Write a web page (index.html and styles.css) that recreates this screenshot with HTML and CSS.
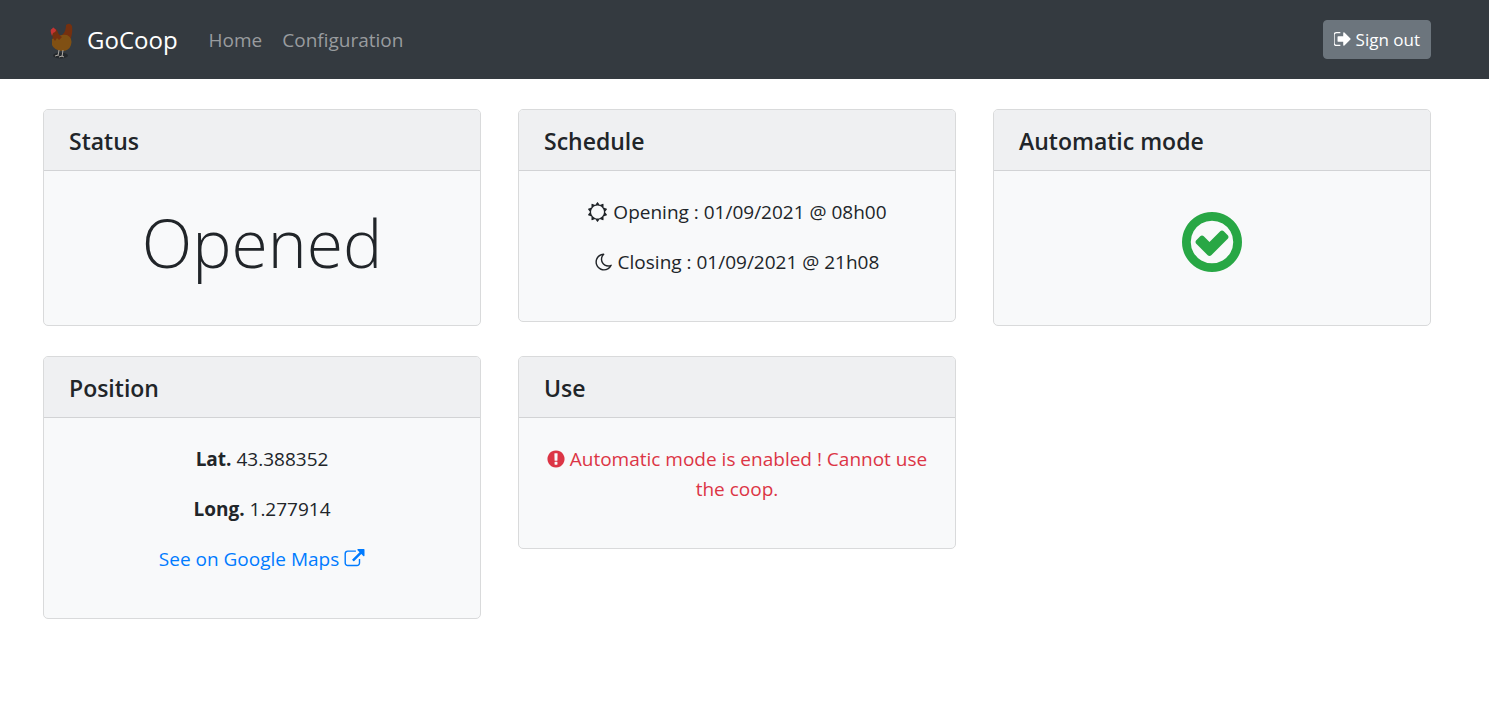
FILE: index.html
```html
<!DOCTYPE html>
<html lang="en">
<head>
<meta charset="utf-8">
<title>GoCoop</title>
<link rel="stylesheet" href="styles.css">
</head>
<body>
<header class="navbar">
  <a class="brand" href="#">
    <svg class="logo" viewBox="1 0 38 38" aria-hidden="true">
      <ellipse cx="18.500" cy="34.500" rx="7.500" ry="3" fill="#25292d"/>
      <path d="M19 21L20 14Q24 11 24 4Q28 1 30 5Q31 12 28 20Z" fill="#75300f"/>
      <path d="M11 8Q15 7 16 12L20 17L11 21Q11 14 9 11Z" fill="#75300f"/>
      <path d="M10 18Q13 16 16 16Q19 13 25 14Q31 17 29 24Q27 30 20 30Q12 29 10 24Z" fill="#805013"/>
      <path d="M11 17L13 12L20 16L17 19L15 17L13 20Z" fill="#75300f"/>
      <path d="M9 12Q8 8 10 8Q11 5 13 8Q15 9 13 11L11 12L10 15Z" fill="#c43434"/>
      <path d="M17 29L16 35M16 34L13 35M21 29L20 36M20 35L17 36M20 35L22 36" stroke="#aaa6a0" stroke-width="1" fill="none"/>
    </svg>
    <span>GoCoop</span>
  </a>
  <nav class="links">
    <a href="#">Home</a>
    <a href="#">Configuration</a>
  </nav>
  <button class="signout" type="button"><svg class="icon" viewBox="128 0 1536 1792" aria-hidden="true"><path d="M704 1440q0 4 1 20t.5 26.500-3 23.500-10 19.500-20.500 6.500h-320q-119 0-203.500-84.500t-84.500-203.500v-704q0-119 84.500-203.500t203.500-84.500h320q13 0 22.500 9.500t9.500 22.500q0 4 1 20t.5 26.500-3 23.500-10 19.500-20.500 6.500h-320q-66 0-113 47t-47 113v704q0 66 47 113t113 47h312l11.500 1 11.500 3 8 5.500 7 9 2 13.500zm928-544q0 26-19 45l-544 544q-19 19-45 19t-45-19-19-45v-288h-448q-26 0-45-19t-19-45v-384q0-26 19-45t45-19h448v-288q0-26 19-45t45-19 45 19l544 544q19 19 19 45z"/></svg> Sign out</button>
</header>
<main class="grid">
  <section class="card">
    <h2 class="card-title">Status</h2>
    <div class="card-body"><p class="display">Opened</p></div>
  </section>
  <section class="card">
    <h2 class="card-title">Schedule</h2>
    <div class="card-body">
      <p><svg class="icon wide" viewBox="0 0 1792 1792" aria-hidden="true"><path d="M1472 896q0-117-45.500-223.500t-123-184-184-123-223.500-45.500-223.500 45.500-184 123-123 184-45.500 223.500 45.500 223.500 123 184 184 123 223.500 45.500 223.500-45.500 184-123 123-184 45.500-223.500zm276 277q-4 15-20 20l-292 96v306q0 16-13 26-15 10-29 4l-292-94-180 248q-10 13-26 13t-26-13l-180-248-292 94q-14 6-29-4-13-10-13-26v-306l-292-96q-16-5-20-20-5-17 4-29l180-248-180-248q-9-13-4-29 4-15 20-20l292-96v-306q0-16 13-26 15-10 29-4l292 94 180-248q9-12 26-12t26 12l180 248 292-94q14-6 29 4 13 10 13 26v306l292 96q16 5 20 20 5 16-4 29l-180 248 180 248q9 12 4 29z"/></svg> Opening : 01/09/2021 @ 08h00</p>
      <p><svg class="icon" viewBox="128 0 1536 1792" aria-hidden="true"><path d="M1390 1303q-54 9-110 9-182 0-337-90t-245-245-90-337q0-192 104-357-201 60-328.500 229t-127.500 384q0 130 51 248.500t136.500 204 204 136.500 248.500 51q144 0 273.500-61.500t220.500-171.500zm203-85q-94 203-283.500 324.500t-413.500 121.500q-156 0-298-61t-245-164-164-245-61-298q0-153 57.500-292.500t156-241.500 235.500-164.500 290-68.500q44-2 61 39 18 41-15 72-86 78-131.500 181.500t-45.500 218.500q0 148 73 273t198 198 273 73q118 0 228-51 41-18 72 13 14 14 17.500 34t-4.500 38z"/></svg> Closing : 01/09/2021 @ 21h08</p>
    </div>
  </section>
  <section class="card">
    <h2 class="card-title">Automatic mode</h2>
    <div class="card-body">
      <p class="display enabled"><svg class="check" viewBox="128 128 1536 1536" role="img" aria-label="Enabled"><path d="M1299 813l-422 422q-19 19-45 19t-45-19l-294-294q-19-19-19-45t19-45l102-102q19-19 45-19t45 19l147 147 275-275q19-19 45-19t45 19l102 102q19 19 19 45t-19 45zm141 83q0-148-73-273t-198-198-273-73-273 73-198 198-73 273 73 273 198 198 273 73 273-73 198-198 73-273zm224 0q0 209-103 385.500t-279.500 279.500-385.500 103-385.500-103-279.500-279.500-103-385.500 103-385.500 279.500-279.500 385.500-103 385.500 103 279.500 279.500 103 385.500z"/></svg></p>
    </div>
  </section>
  <section class="card">
    <h2 class="card-title">Position</h2>
    <div class="card-body">
      <p><strong>Lat.</strong> 43.388352</p>
      <p><strong>Long.</strong> 1.277914</p>
      <p><a class="map-link" href="#">See on Google Maps <svg class="icon wide" viewBox="0 0 1792 1792" aria-hidden="true"><path d="M1408 928v320q0 119-84.500 203.500t-203.500 84.500h-832q-119 0-203.500-84.500t-84.500-203.500v-832q0-119 84.500-203.500t203.500-84.500h704q14 0 23 9t9 23v64q0 14-9 23t-23 9h-704q-66 0-113 47t-47 113v832q0 66 47 113t113 47h832q66 0 113-47t47-113v-320q0-14 9-23t23-9h64q14 0 23 9t9 23zm384-864v512q0 26-19 45t-45 19-45-19l-176-176-652 652q-10 10-23 10t-23-10l-114-114q-10-10-10-23t10-23l652-652-176-176q-19-19-19-45t19-45 45-19h512q26 0 45 19t19 45z"/></svg></a></p>
    </div>
  </section>
  <section class="card">
    <h2 class="card-title">Use</h2>
    <div class="card-body">
      <p class="danger"><svg class="icon" viewBox="128 0 1536 1792" aria-hidden="true"><path d="M896 128q209 0 385.500 103t279.500 279.500 103 385.500-103 385.500-279.500 279.500-385.500 103-385.500-103-279.500-279.500-103-385.500 103-385.500 279.500-279.500 385.500-103zm128 1247v-190q0-14-9-23.500t-22-9.500h-192q-13 0-23 10t-10 23v190q0 13 10 23t23 10h192q13 0 22-9.500t9-23.500zm-2-344l18-621q0-12-10-18-10-8-24-8h-220q-14 0-24 8-10 6-10 18l17 621q0 10 10 17.500t24 7.500h185q14 0 23.500-7.500t10.500-17.500z"/></svg> Automatic mode is enabled ! Cannot use the coop.</p>
    </div>
  </section>
</main>
</body>
</html>
```
FILE: styles.css
```css
* { box-sizing: border-box; }

body {
  margin: 0;
  background: #fff;
  color: #212529;
  font-family: "Segoe UI", "Open Sans", "Noto Sans", sans-serif;
  font-size: 19px;
  line-height: 30px;
}

a { text-decoration: none; }

.navbar {
  display: flex;
  align-items: center;
  padding: 20px 58px 20px 43px;
  background: #343a40;
}

.brand {
  display: flex;
  align-items: center;
  gap: 6px;
  color: #fff;
  font-size: 24px;
}

.logo { width: 38px; height: 38px; }

.links {
  display: flex;
  gap: 20px;
  margin-left: 31px;
}

.links a { color: #999c9f; }

.signout {
  margin-left: auto;
  height: 39px;
  padding: 0 10px;
  border: 1px solid #6c757d;
  border-radius: 4px;
  background: #6c757d;
  color: #fff;
  font: inherit;
  font-size: 17px;
}

.icon {
  width: 18px;
  height: 20px;
  vertical-align: -3px;
  fill: currentColor;
}

.signout .icon { width: 17px; }

.icon.wide { width: 21px; }

.grid {
  display: grid;
  grid-template-columns: repeat(3, 1fr);
  align-items: start;
  gap: 30px 37px;
  padding: 30px 58px 30px 43px;
}

.card {
  border: 1px solid #d9dadb;
  border-radius: 5px;
  background: #f8f9fa;
  overflow: hidden;
}

.card-title {
  margin: 0;
  padding: 16px 25px 14px;
  border-bottom: 1px solid #d2d3d5;
  background: #eff0f2;
  font-size: 23px;
  font-weight: 600;
}

.card-body {
  padding: 26px 25px 24px;
  text-align: center;
}

.card-body p { margin: 0 0 20px; }

.card-body .display {
  padding-top: 6px;
  font-size: 66px;
  font-weight: 300;
  line-height: 78px;
}

.enabled {
  display: flex;
  align-items: center;
  justify-content: center;
  height: 84px;
}

.check {
  width: 60px;
  height: 60px;
  fill: #28a745;
}

.map-link { color: #007bff; }

.danger { color: #dc3545; }
```
